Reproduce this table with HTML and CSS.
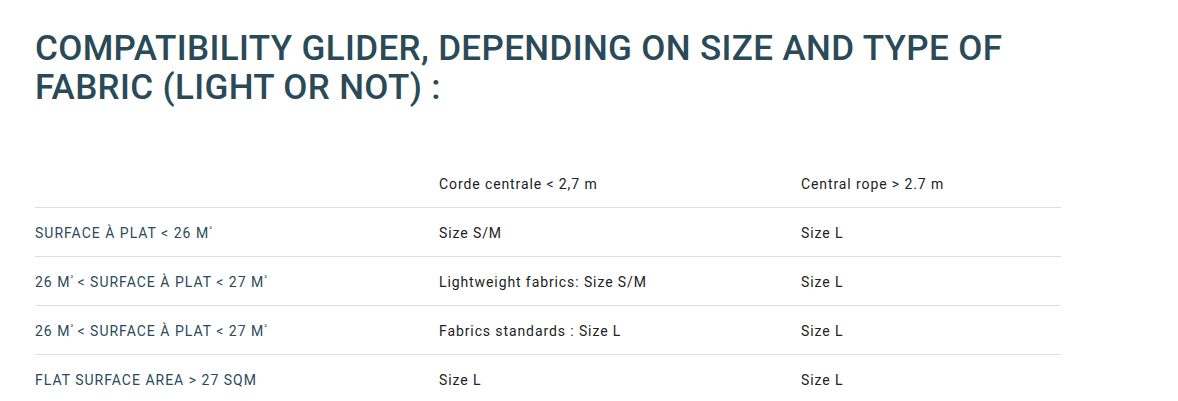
FILE: index.html
```html
<!DOCTYPE html>
<html lang="en">
<head>
<meta charset="utf-8">
<title>Compatibility glider</title>
<link rel="stylesheet" href="styles.css">
</head>
<body>
<main class="page">
  <h2 class="title">COMPATIBILITY GLIDER, DEPENDING ON SIZE AND TYPE OF FABRIC (LIGHT OR NOT) :</h2>
  <table class="compat">
    <thead>
      <tr>
        <th class="label"></th>
        <th>Corde centrale &lt; 2,7 m</th>
        <th>Central rope &gt; 2.7 m</th>
      </tr>
    </thead>
    <tbody>
      <tr>
        <td class="label">SURFACE À PLAT &lt; 26 M<sup>²</sup></td>
        <td>Size S/M</td>
        <td>Size L</td>
      </tr>
      <tr>
        <td class="label">26 M<sup>²</sup> &lt; SURFACE À PLAT &lt; 27 M<sup>²</sup></td>
        <td>Lightweight fabrics: Size S/M</td>
        <td>Size L</td>
      </tr>
      <tr>
        <td class="label">26 M<sup>²</sup> &lt; SURFACE À PLAT &lt; 27 M<sup>²</sup></td>
        <td>Fabrics standards : Size L</td>
        <td>Size L</td>
      </tr>
      <tr>
        <td class="label">FLAT SURFACE AREA &gt; 27 SQM</td>
        <td>Size L</td>
        <td>Size L</td>
      </tr>
    </tbody>
  </table>
</main>
</body>
</html>
```

FILE: styles.css
```css
html, body {
  margin: 0;
  padding: 0;
  background: #ffffff;
}
body {
  font-family: Roboto, "Liberation Sans", sans-serif;
  color: #222222;
}
.page {
  padding: 29px 0 0 35px;
  width: 1026px;
}
.title {
  margin: 0 0 52px 0;
  font-size: 35px;
  line-height: 39px;
  font-weight: 500;
  color: #2a4a58;
  letter-spacing: 0.35px;
}
.compat {
  width: 1026px;
  border-collapse: collapse;
  table-layout: fixed;
}
.compat th,
.compat td {
  height: 48px;
  padding: 3px 0 0 0;
  box-sizing: border-box;
  text-align: left;
  font-size: 14px;
  font-weight: 400;
  letter-spacing: 0.9px;
  vertical-align: middle;
  color: #222222;
}
.compat tbody td {
  height: 49px;
}
.compat th:nth-child(1) { width: 404px; }
.compat th:nth-child(2) { width: 362px; }
.compat tr {
  border-bottom: 1px solid #dddddd;
}
.compat tbody tr:last-child {
  border-bottom: none;
}
.compat .label {
  color: #2a4a58;
  font-weight: 400;
  letter-spacing: 1px;
}
.compat sup {
  font-size: 7px;
  vertical-align: top;
  line-height: 1;
  position: relative;
  top: 1px;
  letter-spacing: 0;
}
```
